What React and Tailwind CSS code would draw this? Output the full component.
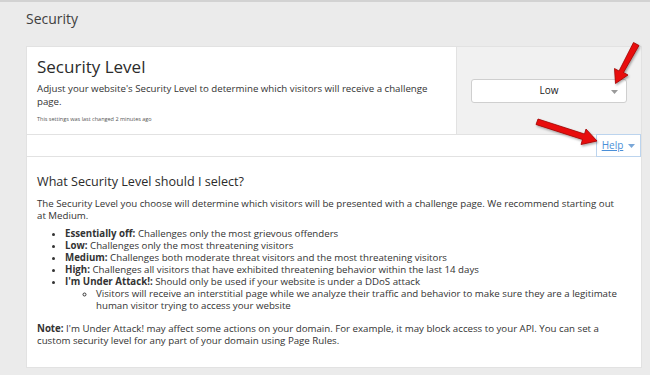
import React from "react";

function Caret({ className }) {
  return (
    <svg className={className} width="7" height="4" viewBox="0 0 7 4">
      <path d="M0 0 L7 0 L3.5 4 Z" fill="currentColor" />
    </svg>
  );
}

function Arrows() {
  return (
    <svg className="absolute left-0 top-0 pointer-events-none" width="650" height="375" viewBox="0 0 650 375">
      <defs>
        <filter id="sh" x="-20%" y="-20%" width="140%" height="140%">
          <feDropShadow dx="1" dy="1.5" stdDeviation="1" floodColor="#000" floodOpacity="0.35" />
        </filter>
      </defs>
      <g filter="url(#sh)" fill="#e8100c" stroke="#a00000" strokeWidth="0.8" strokeLinejoin="round">
        <path d="M633.5 40.5 L639 43.5 L623.5 70.5 L628 73 L615.5 81.5 L614.5 66.5 L619 69 Z" />
        <path d="M538 117 L536 122.5 L582.5 137.5 L581 142.5 L597 139 L586 127 L584.5 132 Z" />
      </g>
    </svg>
  );
}

export default function App() {
  return (
    <div className="relative w-[650px] h-[375px] overflow-hidden bg-[#ebebeb] border-t-2 border-[#d2d2d2] font-['Open_Sans',sans-serif] text-[#333]">
      <div className="pl-[26px] pt-[6px]">
        <h1 className="text-[14px] leading-[22px] text-[#404040]">Security</h1>
      </div>
      <div className="ml-[26px] mt-[16px] w-[616px] bg-white border border-[#e2e2e2]">
        <div className="flex h-[87px]">
          <div className="flex-1 pl-[10px] pt-[8px]">
            <h2 className="text-[17px] leading-[24px] text-[#2b2b2b]">Security Level</h2>
            <p className="text-[9.7px] leading-[13px] mt-[3px] pr-[20px]">
              Adjust your website's Security Level to determine which visitors will receive a challenge page.
            </p>
            <p className="text-[5.5px] leading-[8px] mt-[7px] text-[#555]">This settings was last changed 2 minutes ago</p>
          </div>
          <div className="w-[185px] bg-[#f1f1f1] border-l border-[#e2e2e2] flex items-center justify-center">
            <div className="relative w-[156px] h-[24px] bg-white border border-[#cfcfcf] rounded-[3px] flex items-center justify-center">
              <span className="text-[10px] text-[#222]">Low</span>
              <Caret className="absolute right-[8px] top-[10px] text-[#9a9a9a]" />
            </div>
          </div>
        </div>
        <div className="h-[23px] border-t border-b border-[#e2e2e2] flex justify-end">
          <div className="w-[45px] h-[23px] -mt-px -mb-px border border-[#bcd4ee] flex items-center justify-center gap-[5px] bg-white">
            <span className="text-[10px] text-[#4a8fd8] underline">Help</span>
            <Caret className="text-[#7aa7d8]" />
          </div>
        </div>
        <div className="pl-[10px] pr-[10px] pt-[17px] pb-[20px] text-[9.7px] leading-[12px]">
          <h3 className="text-[12.6px] leading-[16px] text-[#2b2b2b]">What Security Level should I select?</h3>
          <p className="mt-[8px] pr-[8px]">
            The Security Level you choose will determine which visitors will be presented with a challenge page. We recommend starting out at Medium.
          </p>
          <ul className="list-disc pl-[28px] mt-[6px]">
            <li><b>Essentially off:</b> Challenges only the most grievous offenders</li>
            <li><b>Low:</b> Challenges only the most threatening visitors</li>
            <li><b>Medium:</b> Challenges both moderate threat visitors and the most threatening visitors</li>
            <li><b>High:</b> Challenges all visitors that have exhibited threatening behavior within the last 14 days</li>
            <li>
              <b>I'm Under Attack!:</b> Should only be used if your website is under a DDoS attack
              <ul className="list-[circle] pl-[31px]">
                <li>Visitors will receive an interstitial page while we analyze their traffic and behavior to make sure they are a legitimate human visitor trying to access your website</li>
              </ul>
            </li>
          </ul>
          <p className="mt-[11px]">
            <b>Note:</b> I'm Under Attack! may affect some actions on your domain. For example, it may block access to your API. You can set a custom security level for any part of your domain using Page Rules.
          </p>
        </div>
      </div>
      <Arrows />
    </div>
  );
}
